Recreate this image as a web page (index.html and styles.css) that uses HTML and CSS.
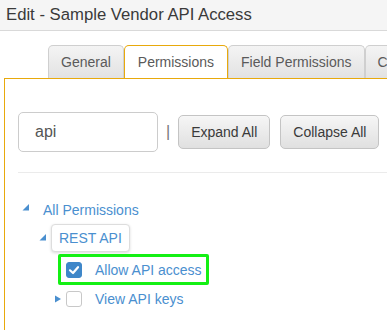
FILE: index.html
```html
<!DOCTYPE html>
<html>
<head>
<meta charset="utf-8">
<link rel="stylesheet" href="styles.css">
</head>
<body>
<div class="header"><span class="title">Edit - Sample Vendor API Access</span></div>
<div class="tabs">
  <div class="tab">General</div>
  <div class="tab active">Permissions</div>
  <div class="tab">Field Permissions</div>
  <div class="tab">Custom</div>
</div>
<div class="panel">
  <div class="toolbar">
    <div class="search">api</div>
    <span class="pipe">|</span>
    <button class="btn">Expand All</button>
    <button class="btn">Collapse All</button>
  </div>
  <div class="rule"></div>
  <div class="tree">
    <div class="row row-root">
      <svg class="tri" width="8" height="8" viewBox="0 0 8 8"><polygon points="7,0 7,6.5 0.5,6.5" fill="#4a8fcf"/></svg>
      <span class="label">All Permissions</span>
    </div>
    <div class="row row-rest">
      <svg class="tri" width="8" height="8" viewBox="0 0 8 8"><polygon points="7,0 7,6.5 0.5,6.5" fill="#4a8fcf"/></svg>
      <span class="label boxed">REST API</span>
    </div>
    <div class="row row-leaf">
      <div class="highlight">
        <span class="cb checked"><svg width="16" height="16" viewBox="0 0 16 16"><polyline points="4,8.3 7,11 12,5.2" fill="none" stroke="#fff" stroke-width="2.2" stroke-linecap="round" stroke-linejoin="round"/></svg></span>
        <span class="label">Allow API access</span>
      </div>
    </div>
    <div class="row row-keys">
      <svg class="tri-r" width="8" height="8" viewBox="0 0 8 8"><polygon points="1,0.5 7,4 1,7.5" fill="#4a8fcf"/></svg>
      <span class="cb"></span>
      <span class="label">View API keys</span>
    </div>
  </div>
</div>
</body>
</html>
```
FILE: styles.css
```css
html, body {
  margin: 0;
  padding: 0;
  background: #fff;
  overflow: hidden;
  font-family: "Liberation Sans", Arial, sans-serif;
}
body {
  width: 387px;
  height: 330px;
}
.header {
  height: 30px;
  background: #f5f5f5;
  border-bottom: 1px solid #d9d9d9;
  display: flex;
  align-items: center;
  padding-left: 6px;
}
.title {
  font-size: 16.7px;
  color: #3a3a3a;
}
.tabs {
  display: flex;
  margin-top: 14px;
  padding-left: 48px;
  width: 600px;
  height: 33px;
}
.tab {
  box-sizing: border-box;
  height: 33px;
  padding: 0 12px;
  margin-right: 0;
  display: flex;
  align-items: center;
  font-size: 14px;
  color: #5a5a5a;
  background: linear-gradient(#f4f4f4, #e2e2e2);
  border: 1px solid #cfcfcf;
  border-bottom: none;
  border-radius: 5px 5px 0 0;
  white-space: nowrap;
  flex: none;
}
.tab.active {
  background: #fff;
  border-color: #e8a90c;
  padding: 0 13px;
}
.panel {
  margin-left: 4px;
  width: 600px;
  height: 400px;
  border: 1px solid #e8a90c;
  padding: 33px 0 0 13px;
  box-sizing: border-box;
}
.toolbar {
  display: flex;
  align-items: center;
  height: 40px;
}
.search {
  box-sizing: border-box;
  width: 140px;
  height: 40px;
  border: 1px solid #ccc;
  border-radius: 5px;
  padding-left: 16px;
  display: flex;
  align-items: center;
  font-size: 16px;
  color: #555;
}
.pipe {
  font-size: 16px;
  color: #777;
  margin: 0 8px 0 8px;
}
.btn {
  box-sizing: border-box;
  height: 34px;
  margin-right: 10px;
  padding: 0 12px;
  font-family: "Liberation Sans", Arial, sans-serif;
  font-size: 14px;
  color: #3a3a3a;
  background: linear-gradient(#f6f6f6, #e0e0e0);
  border: 1px solid #c4c4c4;
  border-radius: 5px;
  box-shadow: inset 0 1px 0 rgba(255,255,255,0.2);
}
.rule {
  margin-top: 20px;
  height: 1px;
  background: #ebebeb;
}
.tree {
  padding-top: 23px;
  font-size: 14px;
  color: #4a8fcf;
}
.row {
  display: flex;
  align-items: center;
}
.label {
  white-space: nowrap;
}
.row-root {
  height: 28px;
  padding-left: 4px;
}
.row-root .tri {
  margin-right: 13px;
  margin-top: -4px;
}
.row-rest {
  height: 30px;
  padding-left: 21px;
  align-items: flex-start;
}
.row-rest .tri {
  margin-right: 4px;
  margin-top: 10px;
}
.boxed {
  box-sizing: border-box;
  height: 28px;
  padding: 0 7px;
  display: flex;
  align-items: center;
  border: 1px solid #ddd;
  border-radius: 4px;
  box-shadow: 0 1px 3px rgba(0,0,0,0.15);
  background: #fff;
}
.row-leaf {
  height: 31px;
  padding-left: 40px;
}
.highlight {
  box-sizing: border-box;
  height: 31px;
  width: 151px;
  border: 3px solid #14f014;
  border-radius: 2px;
  display: flex;
  align-items: center;
  padding-left: 5px;
}
.cb {
  box-sizing: border-box;
  width: 16px;
  height: 16px;
  border: 1px solid #c8c8c8;
  border-radius: 3px;
  background: #fff;
  flex: none;
  margin-right: 13px;
  display: flex;
}
.cb.checked {
  background: #3f87c9;
  border-color: #3f87c9;
}
.cb.checked svg {
  margin: -1px;
}
.row-keys {
  height: 28px;
  padding-left: 36px;
}
.tri-r {
  margin-right: 4px;
}
```
